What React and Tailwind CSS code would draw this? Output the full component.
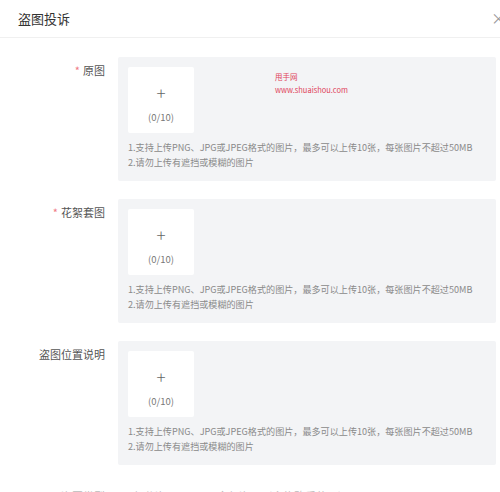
const HINTS = [
  "1.支持上传PNG、JPG或JPEG格式的图片，最多可以上传10张，每张图片不超过50MB",
  "2.请勿上传有遮挡或模糊的图片",
];

const FIELDS = [
  { label: "原图", required: true, mark: true },
  { label: "花絮套图", required: true },
  { label: "盗图位置说明", required: false },
];

function UploadField({ label, required, mark }) {
  return (
    <div className="flex mb-[18px]">
      <div className="w-[118px] shrink-0 pr-[13px] pt-[5px] text-right text-[11px] leading-[16px] text-[#555]">
        {required && <span className="text-[#f07a86] mr-[3px]">*</span>}
        {label}
      </div>
      <div className="relative w-[378px] h-[124px] bg-[#f3f4f6] rounded-[2px] pt-[10px] pl-[10px]">
        <div className="w-[66px] h-[66px] bg-white rounded-[2px] flex flex-col items-center">
          <span className="mt-[16px] text-[17px] leading-[20px] font-light text-[#666]">+</span>
          <span className="mt-[7px] text-[9.5px] leading-[14px] text-[#777]">(0/10)</span>
        </div>
        <div className="mt-[7px] text-[9.1px] leading-[15px] text-[#8a8a8a] whitespace-nowrap">
          {HINTS.map((h) => (
            <p key={h}>{h}</p>
          ))}
        </div>
        {mark && (
          <div className="absolute left-[157px] top-[13px] text-[#e0425a] text-[7.5px] leading-[13px]">
            <p>甩手网</p>
            <p>www.shuaishou.com</p>
          </div>
        )}
      </div>
    </div>
  );
}

export default function App() {
  return (
    <div
      className="w-[500px] h-[492px] overflow-hidden bg-white"
      style={{ fontFamily: '"Noto Sans CJK SC", "Noto Sans", sans-serif' }}
    >
      <div className="h-[38px] border-b border-[#f0f0f0] flex items-center pl-[18px]">
        <span className="text-[13px] text-[#333]">盗图投诉</span>
        <span className="ml-auto mr-[-6px] text-[15px] text-[#999]">×</span>
      </div>
      <div className="pt-[19px]">
        {FIELDS.map((f) => (
          <UploadField key={f.label} {...f} />
        ))}
        <div className="flex items-center pt-[5px] text-[11px] text-[#bbb]">
          <div className="w-[118px] pr-[13px] text-right">盗图类型</div>
          <span className="w-[9px] h-[9px] rounded-full border-[3px] border-[#3b82f6] mr-[6px]" />
          <span>部分盗用</span>
          <span className="ml-[40px]">全部盗用（含修改后使用）</span>
        </div>
      </div>
    </div>
  );
}
